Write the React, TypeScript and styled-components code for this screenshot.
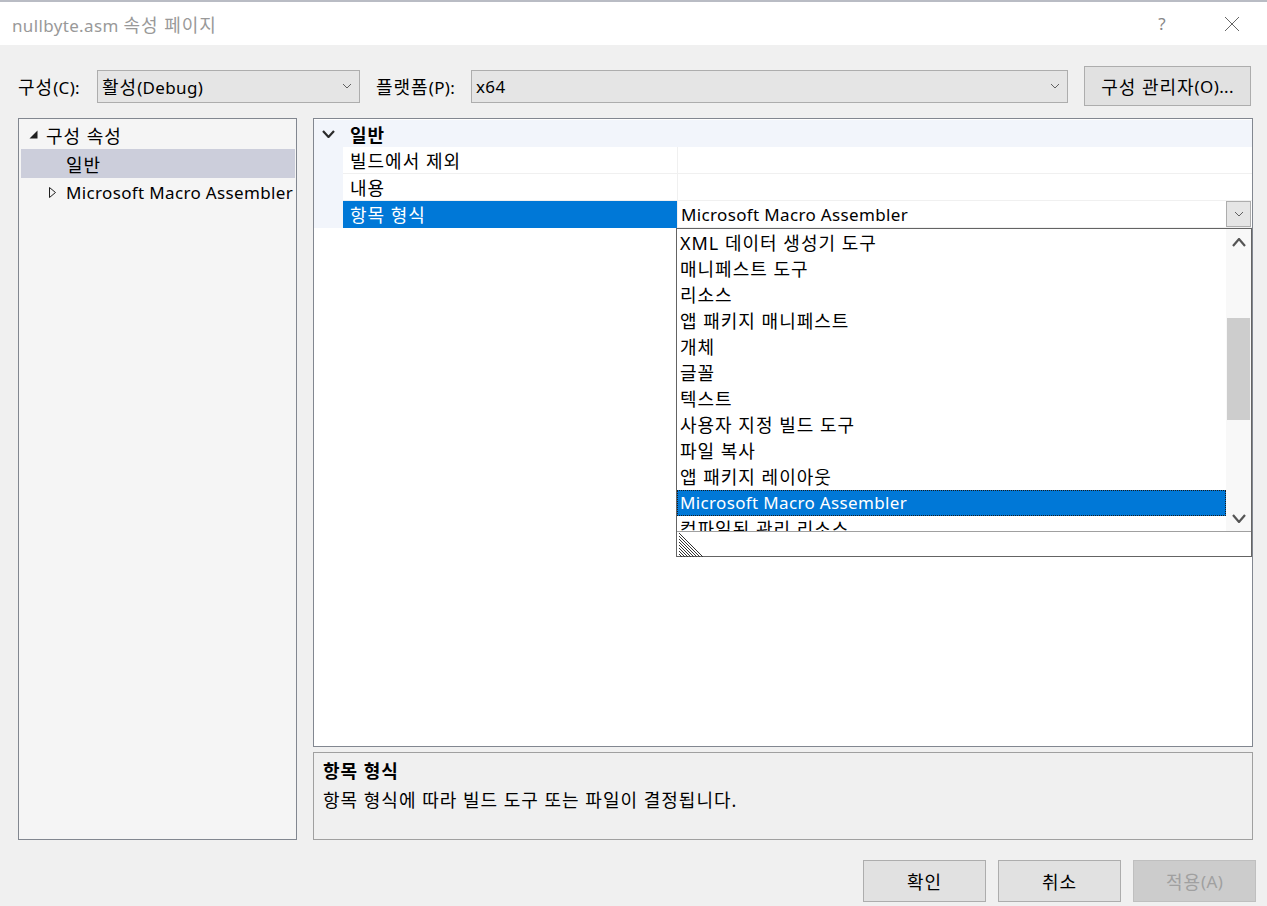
import React from "react";
import styled, { createGlobalStyle } from "styled-components";

const listItems = [
  "XML 데이터 생성기 도구",
  "매니페스트 도구",
  "리소스",
  "앱 패키지 매니페스트",
  "개체",
  "글꼴",
  "텍스트",
  "사용자 지정 빌드 도구",
  "파일 복사",
  "앱 패키지 레이아웃",
  "Microsoft Macro Assembler",
  "컴파일된 관리 리소스",
];

const properties = [
  { name: "빌드에서 제외", value: "" },
  { name: "내용", value: "" },
  { name: "항목 형식", value: "Microsoft Macro Assembler", selected: true },
];

// Hangul in the reference (Malgun Gothic) runs wider than Noto Sans CJK KR
const isKorean = (s: string) => /[가-힣]/.test(s);

type ChevronProps = { up?: boolean; w?: number; h?: number; stroke?: number; color?: string };

const Chevron: React.FC<ChevronProps> = ({ up, w = 10, h = 6, stroke = 1, color = "#606060" }) => (
  <svg width={w} height={h} viewBox={`0 0 ${w} ${h}`}>
    <polyline
      points={up ? `1,${h - 1} ${w / 2},1 ${w - 1},${h - 1}` : `1,1 ${w / 2},${h - 1} ${w - 1},1`}
      fill="none"
      stroke={color}
      strokeWidth={stroke}
    />
  </svg>
);

const App: React.FC = () => {
  return (
    <>
      <GlobalStyle />
      <Window>
        <TitleBar>
          <Title>
            nullbyte.asm <Ko>속성 페이지</Ko>
          </Title>
          <TitleButtons>
            <HelpMark>?</HelpMark>
            <CloseBox>
              <svg width="16" height="16" viewBox="0 0 16 16">
                <path d="M1 1 L15 15 M15 1 L1 15" stroke="#666" strokeWidth="1" />
              </svg>
            </CloseBox>
          </TitleButtons>
        </TitleBar>

        <Content>
          <ConfigRow>
            <Label $width={79}>
              <Ko>구성</Ko>(C):
            </Label>
            <Combo $width={263}>
              <span>
                <Ko>활성</Ko>(Debug)
              </span>
              <Chevron />
            </Combo>
            <Label $width={95} $gap={16}>
              <Ko>플랫폼</Ko>(P):
            </Label>
            <Combo $width={597}>
              <span>x64</span>
              <Chevron />
            </Combo>
            <ManagerButton>
              <Ko>구성 관리자</Ko>(O)...
            </ManagerButton>
          </ConfigRow>

          <Main>
            <TreePanel>
              <TreeRow $level={0}>
                <Expander>
                  <svg width="9" height="9" viewBox="0 0 9 9">
                    <polygon points="8.5,0.5 8.5,8.5 0.5,8.5" fill="#1e1e1e" />
                  </svg>
                </Expander>
                <Ko>구성 속성</Ko>
              </TreeRow>
              <TreeRow $level={1} $selected>
                <Expander />
                <Ko>일반</Ko>
              </TreeRow>
              <TreeRow $level={1}>
                <Expander>
                  <svg width="8" height="11" viewBox="0 0 8 11">
                    <polygon points="0.5,0.5 6.5,5.5 0.5,10.5" fill="none" stroke="#1e1e1e" />
                  </svg>
                </Expander>
                Microsoft Macro Assembler
              </TreeRow>
            </TreePanel>

            <RightColumn>
              <PropertyGrid>
                <CategoryRow>
                  <Gutter>
                    <Chevron w={13} h={8} stroke={2.2} color="#2b2b2b" />
                  </Gutter>
                  <CategoryName>
                    <Ko>일반</Ko>
                  </CategoryName>
                </CategoryRow>
                {properties.map((p) => (
                  <PropRow key={p.name}>
                    <Gutter />
                    <PropName $selected={p.selected}>
                      <Ko>{p.name}</Ko>
                    </PropName>
                    <PropValue>
                      <ValueText>{p.value}</ValueText>
                      {p.selected && (
                        <DropButton>
                          <Chevron />
                        </DropButton>
                      )}
                    </PropValue>
                  </PropRow>
                ))}

                <DropList>
                  <ListArea>
                    <Items>
                      {listItems.map((item) => (
                        <Item
                          key={item}
                          $ko={isKorean(item)}
                          $selected={item === "Microsoft Macro Assembler"}
                        >
                          {item}
                        </Item>
                      ))}
                    </Items>
                    <ScrollBar>
                      <ScrollArrow>
                        <Chevron up w={14} h={9} stroke={2.2} color="#555" />
                      </ScrollArrow>
                      <Track>
                        <Thumb />
                      </Track>
                      <ScrollArrow>
                        <Chevron w={14} h={9} stroke={2.2} color="#555" />
                      </ScrollArrow>
                    </ScrollBar>
                  </ListArea>
                  <Gripper>
                    <svg width="26" height="25" viewBox="0 0 26 25">
                      {[0, 3, 6, 9, 12, 15, 18, 21].map((k) => (
                        <line key={k} x1={0} y1={k + 1} x2={24 - k} y2={25} stroke="#333" strokeWidth="1" />
                      ))}
                    </svg>
                  </Gripper>
                </DropList>
              </PropertyGrid>

              <Description>
                <DescTitle>
                  <Ko>항목 형식</Ko>
                </DescTitle>
                <DescText>
                  <Ko>항목 형식에 따라 빌드 도구 또는 파일이 결정됩니다.</Ko>
                </DescText>
              </Description>
            </RightColumn>
          </Main>
        </Content>

        <Footer>
          <DialogButton>
            <Ko>확인</Ko>
          </DialogButton>
          <DialogButton>
            <Ko>취소</Ko>
          </DialogButton>
          <DialogButton $disabled>
            <Ko>적용</Ko>(A)
          </DialogButton>
        </Footer>
      </Window>
    </>
  );
};

const GlobalStyle = createGlobalStyle`
  html, body {
    margin: 0;
    padding: 0;
    background: #f0f0f0;
  }
  body {
    font-family: "Noto Sans", "Noto Sans CJK KR", sans-serif;
    font-size: 17px;
    letter-spacing: 0.35px;
    color: #000;
  }
  * {
    box-sizing: border-box;
  }
`;

const Ko = styled.span`
  font-size: 18px;
  letter-spacing: 1px;
`;

const Window = styled.div`
  width: 1267px;
  height: 906px;
  display: flex;
  flex-direction: column;
  background: #f0f0f0;
  overflow: hidden;
`;

const TitleBar = styled.div`
  height: 45px;
  flex: none;
  display: flex;
  align-items: center;
  justify-content: space-between;
  background: #fff;
  border-top: 2px solid #b9bcc4;
  padding-left: 12px;
`;

const Title = styled.div`
  font-size: 17px;
  color: #999;
`;

const TitleButtons = styled.div`
  display: flex;
  align-items: center;
`;

const HelpMark = styled.div`
  width: 70px;
  text-align: center;
  font-size: 17px;
  color: #888;
`;

const CloseBox = styled.div`
  width: 70px;
  display: flex;
  justify-content: center;
`;

const Content = styled.div`
  padding: 0 14px 0 18px;
`;

const ConfigRow = styled.div`
  height: 40px;
  margin-top: 21px;
  display: flex;
  align-items: center;
`;

const Label = styled.div<{ $width: number; $gap?: number }>`
  width: ${(p) => p.$width}px;
  margin-left: ${(p) => p.$gap ?? 0}px;
  flex: none;
  white-space: nowrap;
`;

const Combo = styled.div<{ $width: number }>`
  width: ${(p) => p.$width}px;
  height: 33px;
  flex: none;
  display: flex;
  align-items: center;
  justify-content: space-between;
  padding: 0 7px 0 4px;
  background: #e5e5e5;
  border: 1px solid #adadad;
`;

const ManagerButton = styled.div`
  width: 167px;
  height: 40px;
  margin-left: 16px;
  display: flex;
  align-items: center;
  justify-content: center;
  white-space: nowrap;
  background: #e1e1e1;
  border: 1px solid #adadad;
`;

const Main = styled.div`
  margin-top: 12px;
  height: 722px;
  display: flex;
  gap: 16px;
`;

const TreePanel = styled.div`
  width: 279px;
  flex: none;
  padding: 1px 1px 0 2px;
  background: #f5f5f5;
  border: 1px solid #828790;
`;

const TreeRow = styled.div<{ $level: number; $selected?: boolean }>`
  height: 29px;
  display: flex;
  align-items: center;
  padding-left: ${(p) => 8 + p.$level * 20}px;
  background: ${(p) => (p.$selected ? "#cccedb" : "transparent")};
  white-space: nowrap;
`;

const Expander = styled.span`
  width: 17px;
  flex: none;
  display: flex;
  align-items: center;
`;

const RightColumn = styled.div`
  width: 940px;
  flex: none;
  display: flex;
  flex-direction: column;
  gap: 5px;
`;

const PropertyGrid = styled.div`
  position: relative;
  height: 629px;
  padding-top: 1px;
  background: #fff;
  border: 1px solid #828790;
`;

const CategoryRow = styled.div`
  height: 27px;
  display: flex;
  align-items: center;
  background: #f2f5fb;
`;

const Gutter = styled.div`
  width: 29px;
  height: 100%;
  flex: none;
  display: flex;
  align-items: center;
  justify-content: center;
  background: #f2f5fb;
`;

const CategoryName = styled.div`
  font-weight: 700;
  padding-left: 7px;
`;

const PropRow = styled.div`
  height: 27px;
  display: flex;
`;

const PropName = styled.div<{ $selected?: boolean }>`
  width: 334px;
  flex: none;
  display: flex;
  align-items: center;
  padding-left: 7px;
  background: ${(p) => (p.$selected ? "#0078d7" : "#fff")};
  color: ${(p) => (p.$selected ? "#fff" : "#000")};
  border-bottom: 1px solid ${(p) => (p.$selected ? "#0078d7" : "#f0f0f0")};
`;

const PropValue = styled.div`
  flex: 1;
  display: flex;
  align-items: center;
  justify-content: space-between;
  border-left: 1px solid #f0f0f0;
  border-bottom: 1px solid #f0f0f0;
`;

const ValueText = styled.span`
  padding-left: 3px;
`;

const DropButton = styled.div`
  width: 25px;
  height: 26px;
  margin-right: 1px;
  display: flex;
  align-items: center;
  justify-content: center;
  background: #e5e5e5;
  border: 1px solid #adadad;
`;

const DropList = styled.div`
  position: absolute;
  left: 362px;
  top: 109px;
  width: 576px;
  height: 329px;
  display: flex;
  flex-direction: column;
  background: #fff;
  border: 1px solid #646464;
`;

const ListArea = styled.div`
  height: 302px;
  display: flex;
`;

const Items = styled.div`
  flex: 1;
  overflow: hidden;
  padding-top: 1px;
`;

const Item = styled.div<{ $selected?: boolean; $ko?: boolean }>`
  height: 26px;
  line-height: 24px;
  padding-left: 2px;
  white-space: nowrap;
  font-size: ${(p) => (p.$ko ? 18 : 17)}px;
  letter-spacing: ${(p) => (p.$ko ? 1 : 0.35)}px;
  background: ${(p) => (p.$selected ? "#0078d7" : "transparent")};
  color: ${(p) => (p.$selected ? "#fff" : "#000")};
  border: 1px ${(p) => (p.$selected ? "dotted #1b1b1b" : "solid transparent")};
`;

const ScrollBar = styled.div`
  width: 25px;
  flex: none;
  display: flex;
  flex-direction: column;
  background: #f8f8f8;
`;

const ScrollArrow = styled.div`
  height: 26px;
  display: flex;
  align-items: center;
  justify-content: center;
`;

const Track = styled.div`
  flex: 1;
  padding: 63px 1px 0;
`;

const Thumb = styled.div`
  height: 102px;
  background: #cdcdcd;
`;

const Gripper = styled.div`
  flex: 1;
  display: flex;
  align-items: flex-end;
  padding-left: 2px;
  border-top: 1px solid #a0a0a0;
`;

const Description = styled.div`
  height: 88px;
  padding: 4px 9px;
  background: #f0f0f0;
  border: 1px solid #a0a0a0;
`;

const DescTitle = styled.div`
  font-weight: 700;
  line-height: 28px;
`;

const DescText = styled.div`
  line-height: 28px;
`;

const Footer = styled.div`
  margin-top: 20px;
  padding-right: 11px;
  display: flex;
  justify-content: flex-end;
  gap: 12px;
`;

const DialogButton = styled.div<{ $disabled?: boolean }>`
  width: 123px;
  height: 42px;
  display: flex;
  align-items: center;
  justify-content: center;
  white-space: nowrap;
  background: ${(p) => (p.$disabled ? "#cccccc" : "#e1e1e1")};
  border: 1px solid ${(p) => (p.$disabled ? "#bfbfbf" : "#adadad")};
  color: ${(p) => (p.$disabled ? "#a0a0a0" : "#000")};
`;

export default App;
